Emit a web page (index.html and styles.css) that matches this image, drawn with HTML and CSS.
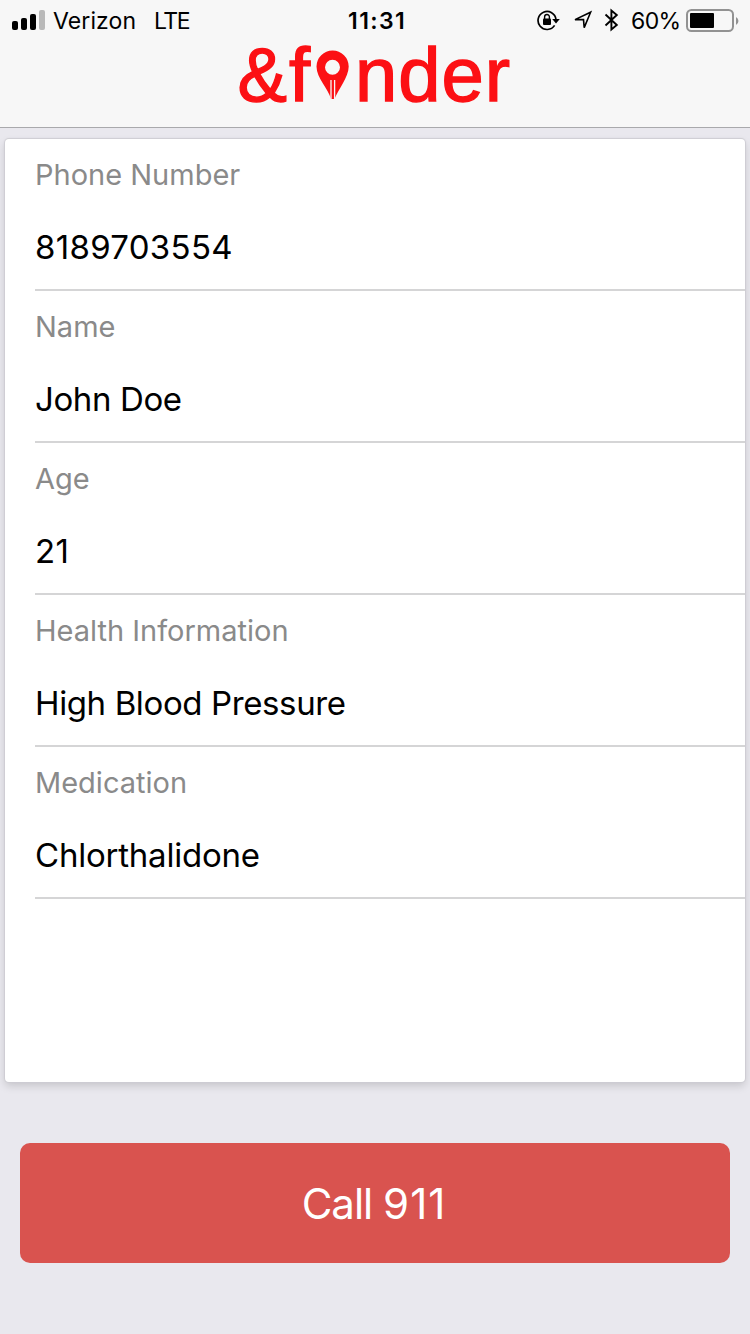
FILE: index.html
```html
<!DOCTYPE html>
<html lang="en">
<head>
<meta charset="utf-8">
<meta name="viewport" content="width=device-width">
<title>&amp;finder</title>
<link rel="stylesheet" href="styles.css">
</head>
<body>
<header class="header">
  <div class="status">
    <div class="status-left">
      <svg class="signal" width="34" height="20" viewBox="0 0 34 20">
        <rect x="0" y="11" width="6" height="9" rx="2"/>
        <rect x="9" y="8" width="6" height="12" rx="2"/>
        <rect x="18" y="4" width="6" height="16" rx="2"/>
        <rect x="27" y="0" width="6" height="20" rx="2" fill="#b9b9b9"/>
      </svg>
      <span class="carrier">Verizon</span>
      <span class="network">LTE</span>
    </div>
    <span class="time">11:31</span>
    <div class="status-right">
      <svg class="lock" width="24" height="22" viewBox="0 0 24 22">
        <path d="M17.6 15.4A9 9 0 1 1 19 9.5" fill="none" stroke="#000" stroke-width="1.7"/>
        <path d="M15.2 9h7.6L19 13.6z"/>
        <rect x="6" y="8.5" width="8" height="6.5" rx="1"/>
        <path d="M7.6 9V6.9a2.4 2.4 0 0 1 4.8 0v2.1" fill="none" stroke="#000" stroke-width="1.4"/>
      </svg>
      <svg class="arrow" width="20" height="20" viewBox="0 0 20 20">
        <path d="M2 9.6 17.6 2.2 11.2 17.6 10.5 9.6z" fill="none" stroke="#000" stroke-width="1.6"/>
      </svg>
      <svg class="bluetooth" width="16" height="24" viewBox="0 0 16 24">
        <path d="M1.5 6.5 12.8 17 7.4 21.5V2.5l5.4 4.5L1.5 17.5" fill="none" stroke="#000" stroke-width="1.9"/>
      </svg>
      <span class="percent">60%</span>
      <svg class="battery" width="54" height="24" viewBox="0 0 54 24">
        <rect x="1" y="1" width="46" height="21" rx="4.5" fill="none" stroke="#929292" stroke-width="2"/>
        <rect x="4" y="4" width="24" height="15" rx="1"/>
        <path d="M50 8a4.5 4.5 0 0 1 0 8z" fill="#929292"/>
      </svg>
    </div>
  </div>
  <svg class="logo" width="280" height="70" viewBox="0 0 280 70" role="img" aria-label="&amp;finder">
    <text x="2.5" y="60.5" textLength="49.5" lengthAdjust="spacingAndGlyphs">&amp;</text>
    <text x="54" y="60.5">f</text>
    <path fill-rule="evenodd" d="M96 59C93 48 81.5 38 81.5 26.5a16.1 16 0 0 1 32.2 0C113.7 37 103 50 99.5 59zM97.5 19.8a7.5 7.5 0 1 0 0 15a7.5 7.5 0 0 0 0-15z"/>
    <path class="logo-slit" d="M96 40V60M99.6 40V60"/>
    <text x="120" y="60.5" textLength="155" lengthAdjust="spacing">nder</text>
  </svg>
</header>
<main class="content">
  <section class="card">
    <div class="field"><div class="label">Phone Number</div><div class="value numeric">8189703554</div></div>
    <div class="field"><div class="label">Name</div><div class="value">John Doe</div></div>
    <div class="field"><div class="label">Age</div><div class="value numeric">21</div></div>
    <div class="field"><div class="label">Health Information</div><div class="value">High Blood Pressure</div></div>
    <div class="field"><div class="label">Medication</div><div class="value wide">Chlorthalidone</div></div>
  </section>
  <button class="call">Call <span class="call-number">911</span></button>
</main>
</body>
</html>
```
FILE: styles.css
```css
* { box-sizing: border-box; }
body {
  margin: 0;
  height: 1334px;
  overflow: hidden;
  background: #e9e8ee;
  font-family: Inter, "Liberation Sans", sans-serif;
  color: #000;
}
.header {
  height: 128px;
  background: #f7f7f7;
  border-bottom: 1px solid #a9a9ac;
}
.status {
  display: grid;
  grid-template-columns: 348px 60px 1fr;
  height: 40px;
  font-size: 23px;
  line-height: 42px;
}
.status-left, .status-right { display: flex; align-items: flex-start; }
.status-left { padding-left: 12px; }
.signal { margin-top: 10px; }
.carrier { margin-left: 7px; width: 101px; letter-spacing: .1px; }
.network { letter-spacing: -1.5px; }
.time { font-weight: 600; letter-spacing: 1.4px; white-space: nowrap; }
.status-right { padding-left: 129px; }
.lock { margin-top: 10px; flex: none; }
.arrow { margin: 10px 0 0 12px; flex: none; }
.bluetooth { margin: 8px 0 0 11px; flex: none; }
.percent { margin-left: 11px; width: 55px; flex: none; letter-spacing: -.6px; }
.battery { margin-top: 9px; flex: none; }
.logo { display: block; margin: 0 0 0 235px; overflow: visible; fill: #fc1014; }
.logo text { font: 76px "Liberation Sans", Arial, sans-serif; stroke: #fc1014; stroke-width: 1.4px; }
.logo-slit { fill: none; stroke: #f7f7f7; stroke-width: 1.3px; }
.content { padding: 11px 5px 0; }
.card {
  height: 943px;
  padding-left: 30px;
  background: #fff;
  border-radius: 4px;
  box-shadow: 0 0 1px 1px #cecdd3, 0 4px 8px rgba(0, 0, 0, .15);
}
.field { height: 152px; border-bottom: 2px solid #d5d5d6; }
.label { padding-top: 18px; font-size: 29px; line-height: 36px; color: #8a8a8a; }
.value { padding-top: 34px; font-size: 33px; line-height: 40px; letter-spacing: -.38px; }
.numeric { letter-spacing: .3px; }
.wide { letter-spacing: -.22px; }
.call {
  display: block;
  width: 710px;
  height: 120px;
  margin: 61px 0 0 15px;
  padding: 1px 2px 0 0;
  border: 0;
  border-radius: 10px;
  background: #d9534f;
  color: #fff;
  font: 400 42px/120px Inter, "Liberation Sans", sans-serif;
  letter-spacing: -1px;
}
.call-number { letter-spacing: 1px; }
```
